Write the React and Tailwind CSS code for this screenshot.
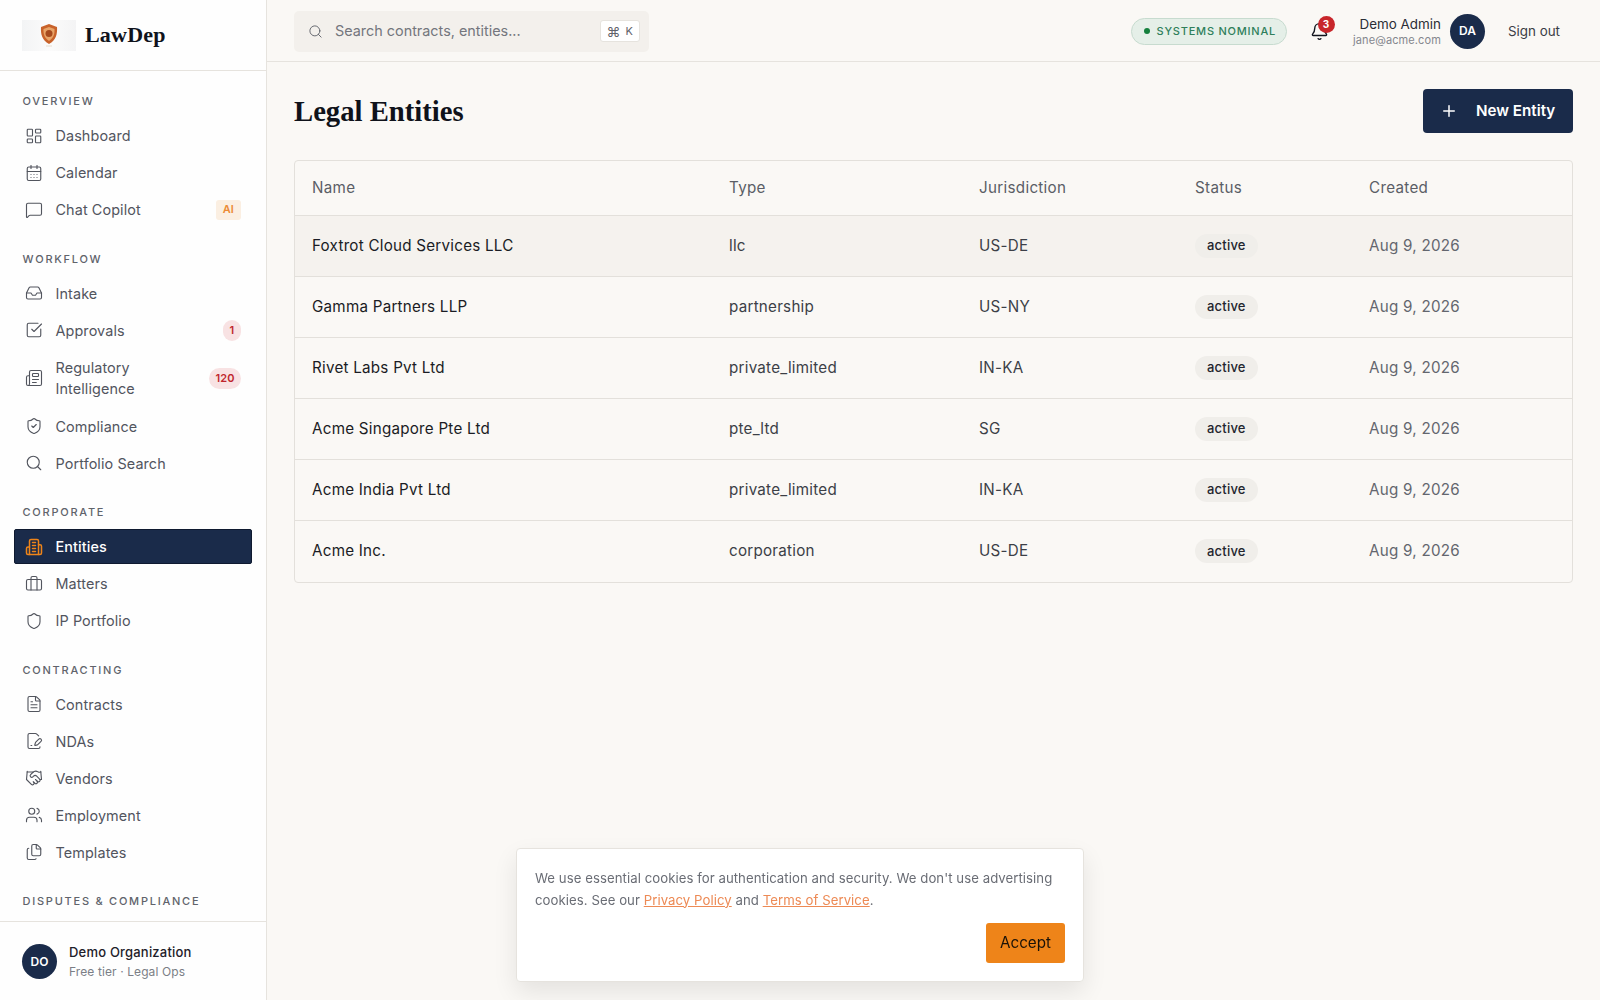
import React from 'react';
import {
  LayoutDashboard, CalendarDays, MessageSquare, Inbox, SquareCheckBig, Newspaper, ShieldCheck, Search,
  Briefcase, Shield, FileText, FilePenLine, Handshake, Users, Files, Plus, Bell,
} from 'lucide-react';

// lucide's Building2 has short dashes, the picture has full rungs
const EntitiesIcon = ({ size, className }) => (
  <svg width={size} height={size} viewBox="0 0 24 24" fill="none" stroke="currentColor" strokeWidth="2" strokeLinecap="round" strokeLinejoin="round" className={className}>
    <path d="M6 22V4a2 2 0 0 1 2-2h8a2 2 0 0 1 2 2v18Z" />
    <path d="M6 12H4a2 2 0 0 0-2 2v6a2 2 0 0 0 2 2h2" />
    <path d="M18 9h2a2 2 0 0 1 2 2v9a2 2 0 0 1-2 2h-2" />
    <path d="M10 6h4" />
    <path d="M10 10h4" />
    <path d="M10 14h4" />
    <path d="M10 18h4" />
  </svg>
);

const navSections = [
  {
    label: 'Overview',
    items: [
      { name: 'Dashboard', icon: LayoutDashboard },
      { name: 'Calendar', icon: CalendarDays },
      { name: 'Chat Copilot', icon: MessageSquare, tag: 'AI' },
    ],
  },
  {
    label: 'Workflow',
    items: [
      { name: 'Intake', icon: Inbox },
      { name: 'Approvals', icon: SquareCheckBig, count: '1' },
      { name: 'Regulatory Intelligence', icon: Newspaper, count: '120', tall: true },
      { name: 'Compliance', icon: ShieldCheck },
      { name: 'Portfolio Search', icon: Search },
    ],
  },
  {
    label: 'Corporate',
    items: [
      { name: 'Entities', icon: EntitiesIcon, active: true },
      { name: 'Matters', icon: Briefcase },
      { name: 'IP Portfolio', icon: Shield },
    ],
  },
  {
    label: 'Contracting',
    items: [
      { name: 'Contracts', icon: FileText },
      { name: 'NDAs', icon: FilePenLine },
      { name: 'Vendors', icon: Handshake },
      { name: 'Employment', icon: Users },
      { name: 'Templates', icon: Files },
    ],
  },
  { label: 'Disputes & Compliance', items: [] },
];

const entities = [
  { name: 'Foxtrot Cloud Services LLC', type: 'llc', jurisdiction: 'US-DE' },
  { name: 'Gamma Partners LLP', type: 'partnership', jurisdiction: 'US-NY' },
  { name: 'Rivet Labs Pvt Ltd', type: 'private_limited', jurisdiction: 'IN-KA' },
  { name: 'Acme Singapore Pte Ltd', type: 'pte_ltd', jurisdiction: 'SG' },
  { name: 'Acme India Pvt Ltd', type: 'private_limited', jurisdiction: 'IN-KA' },
  { name: 'Acme Inc.', type: 'corporation', jurisdiction: 'US-DE' },
];

const LogoMark = () => (
  <div className="w-[54px] h-[31px] flex items-center justify-center bg-gradient-to-r from-[#f3f4f5] via-[#fbfbfb] to-[#f4f4f5]">
    <svg width="20" height="25" viewBox="0 0 20 25">
      <path d="M10 1 L18 4 C18.500 11 17 17 10 21 C3 17 1.500 11 2 4 Z" fill="#c8622a" />
      <path d="M10 4 L15.500 6 C15.800 11 14.500 15 10 18 C5.500 15 4.200 11 4.500 6 Z" fill="#e8a468" />
      <circle cx="10" cy="10.500" r="3.500" fill="#a64a1e" />
      <path d="M7 23 H13" stroke="#e6dccf" strokeWidth="1" />
    </svg>
  </div>
);

const NavItem = ({ item }) => {
  const Icon = item.icon;
  return (
    <div
      className={`flex items-center gap-[13px] pr-[11px] rounded-[2px] leading-[21px] text-[14.4px] tracking-[0.1px] ${
        item.active
          ? 'pl-[9.500px] py-[6px] bg-[#1a2b4a] border border-[#0f1a30] text-white font-medium'
          : item.tall
            ? 'pl-[10.500px] py-[7.5px] text-[#52555e]'
            : 'pl-[10.500px] py-[7px] text-[#52555e]'
      }`}
    >
      <Icon size={18} strokeWidth={1.5} className={item.active ? 'text-[#ee8419] shrink-0' : 'text-[#52555e] shrink-0'} />
      <span className="flex-1">{item.name}</span>
      {item.tag && (
        <span className="px-[7px] h-[20px] flex items-center rounded-[3px] bg-[#fbefe2] text-[#ec8b35] text-[11px] font-semibold">
          {item.tag}
        </span>
      )}
      {item.count && (
        <span className="min-w-[18px] px-[6.500px] h-[21px] flex items-center justify-center rounded-full bg-[#f8e2e3] text-[#c0262d] text-[11px] font-semibold">
          {item.count}
        </span>
      )}
    </div>
  );
};

const Sidebar = () => (
  <aside className="w-[267px] h-screen shrink-0 flex flex-col bg-[#fefefe] border-r border-[#e6e3de]">
    <div className="h-[71px] shrink-0 flex items-center gap-[9px] pl-[22px] border-b border-[#e6e3de]">
      <LogoMark />
      <span className="font-['Liberation_Serif',serif] font-bold text-[22px] pb-[2px] tracking-[0.2px] text-[#10131c]">LawDep</span>
    </div>
    <nav className="flex-1 min-h-0 overflow-hidden px-[14px] pt-[22px]">
      {navSections.map((section) => (
        <div key={section.label} className="mb-[23.5px]">
          <div className="h-[16px] leading-[16px] mb-[9px] pl-[8.5px] text-[11px] font-medium uppercase tracking-[0.16em] text-[#60636b]">
            {section.label}
          </div>
          <div className="flex flex-col gap-[2px]">
            {section.items.map((item) => (
              <NavItem key={item.name} item={item} />
            ))}
          </div>
        </div>
      ))}
    </nav>
    <div className="h-[79px] shrink-0 flex items-center gap-[12px] pl-[22px] pt-[1px] border-t border-[#e6e3de]">
      <div className="w-[35px] h-[35px] rounded-full bg-[#1a2b4a] text-white flex items-center justify-center text-[12px] font-semibold">
        DO
      </div>
      <div>
        <div className="text-[13px] leading-[19px] font-medium tracking-[0.2px] text-[#1d2029]">Demo Organization</div>
        <div className="text-[12px] leading-[19px] tracking-[0.1px] text-[#7b7e86]">Free tier · Legal Ops</div>
      </div>
    </div>
  </aside>
);

const Header = () => (
  <header className="h-[62px] shrink-0 flex items-center justify-between pl-[27px] pr-[27px] pt-[1px] border-b border-[#e6e3de]">
    <div className="w-[355px] h-[41px] flex items-center rounded-[5px] bg-[#f3f0ec] pl-[14px] pr-[9px]">
      <Search size={15} strokeWidth={1.5} className="text-[#5f626a]" />
      <span className="flex-1 ml-[12px] text-[14.4px] text-[#74767d]">Search contracts, entities...</span>
      <span className="h-[22px] px-[6px] flex items-center gap-[5px] rounded-[3px] bg-white border border-[#e6e3de] text-[12px] text-[#5f626a]">
        <span className="text-[14px]">⌘</span>
        <span className="text-[11px]">K</span>
      </span>
    </div>
    <div className="flex items-center">
      <div className="h-[27px] w-[156px] flex items-center gap-[7px] pl-[12px] rounded-full bg-[#e5efe8] border border-[#c7dbcf]">
        <span className="w-[6px] h-[6px] rounded-full bg-[#15803d]" />
        <span className="text-[11px] font-medium tracking-[0.07em] text-[#2f7f5b]">SYSTEMS NOMINAL</span>
      </div>
      <div className="relative ml-[22.500px] w-[20px] h-[20px] flex items-center justify-center">
        <Bell size={19} strokeWidth={1.75} className="text-[#10131c]" />
        <span className="absolute -top-[5.500px] -right-[5.500px] w-[17px] h-[17px] rounded-full bg-[#c8262b] text-white text-[10px] font-bold flex items-center justify-center">
          3
        </span>
      </div>
      <div className="ml-[24px] pt-[2px] text-right">
        <div className="text-[13.4px] leading-[17px] text-[#2a2d35]">Demo Admin</div>
        <div className="text-[11px] leading-[15px] tracking-[0.1px] text-[#85878e]">jane@acme.com</div>
      </div>
      <div className="ml-[9px] w-[35px] h-[35px] rounded-full bg-[#1a2b4a] text-white flex items-center justify-center text-[12px] font-semibold">
        DA
      </div>
      <span className="ml-[23px] mr-[13px] text-[13.4px] text-[#3a3d45]">Sign out</span>
    </div>
  </header>
);

const EntitiesTable = () => (
  <div className="rounded-[4px] border border-[#e3e0db] overflow-hidden">
    <table className="w-full table-fixed border-collapse text-left">
      <colgroup>
        <col className="w-[417px]" />
        <col className="w-[250px]" />
        <col className="w-[216px]" />
        <col className="w-[174px]" />
        <col />
      </colgroup>
      <thead>
        <tr className="h-[54.5px] text-[#5b5e66]">
          {['Name', 'Type', 'Jurisdiction', 'Status', 'Created'].map((col) => (
            <th key={col} className="pl-[17px] pt-[1px] text-[15.2px] font-normal tracking-[0.3px]">{col}</th>
          ))}
        </tr>
      </thead>
      <tbody className="tracking-[0.24px]">
        {entities.map((row, i) => (
          <tr key={row.name} className={`h-[61px] border-t border-[#e3e0db] text-[15.2px] ${i === 0 ? 'bg-[#f5f2ee]' : ''}`}>
            <td className="pl-[17px] pt-[1px] text-[#1a1c24]">{row.name}</td>
            <td className="pl-[17px] pt-[1px] text-[#3c3f47]">{row.type}</td>
            <td className="pl-[17px] pt-[1px] text-[#3c3f47]">{row.jurisdiction}</td>
            <td className="pl-[17px]">
              <span className="inline-flex h-[24px] items-center px-[12px] rounded-full bg-[#f0eeea] text-[13px] font-medium tracking-[0.2px] text-[#23252e]">
                active
              </span>
            </td>
            <td className="pl-[17px] pt-[1px] text-[#63666e]">Aug 9, 2026</td>
          </tr>
        ))}
      </tbody>
    </table>
  </div>
);

const CookieBanner = () => (
  <div className="fixed left-1/2 -translate-x-1/2 bottom-[18px] w-[568px] h-[134px] bg-white border border-[#e6e3de] rounded-[4px] shadow-[0_10px_25px_rgba(0,0,0,0.09)] px-[18px] pt-[17.500px]">
    <p className="text-[13.2px] leading-[22px] tracking-[0.05px] text-[#6a6d75]">
      We use essential cookies for authentication and security. We don't use advertising cookies. See our{' '}
      <span className="underline text-[#ed8a55]">Privacy Policy</span> and{' '}
      <span className="underline text-[#ed8a55]">Terms of Service</span>.
    </p>
    <div className="flex justify-end mt-[12.500px]">
      <button className="h-[40px] w-[79px] pt-[1px] rounded-[3px] bg-[#ee8419] text-[15.2px] text-[#1a1208]">Accept</button>
    </div>
  </div>
);

export default function App() {
  return (
    <div className="flex h-screen overflow-hidden bg-[#faf8f5] font-['Inter',sans-serif]">
      <Sidebar />
      <div className="flex-1 min-w-0 flex flex-col">
        <Header />
        <main className="flex-1 px-[27px]">
          <div className="flex items-center justify-between h-[98px]">
            <h1 className="font-['Liberation_Serif',serif] font-bold text-[28.7px] pt-[1px] text-[#0f121a]">Legal Entities</h1>
            <button className="w-[150px] h-[44px] flex items-center pl-[17px] rounded-[4px] bg-[#1a2b4a] text-white text-[15.2px] font-semibold">
              <Plus size={18} strokeWidth={2} />
              <span className="ml-[18px] pt-[1px]">New Entity</span>
            </button>
          </div>
          <EntitiesTable />
        </main>
      </div>
      <CookieBanner />
    </div>
  );
}
